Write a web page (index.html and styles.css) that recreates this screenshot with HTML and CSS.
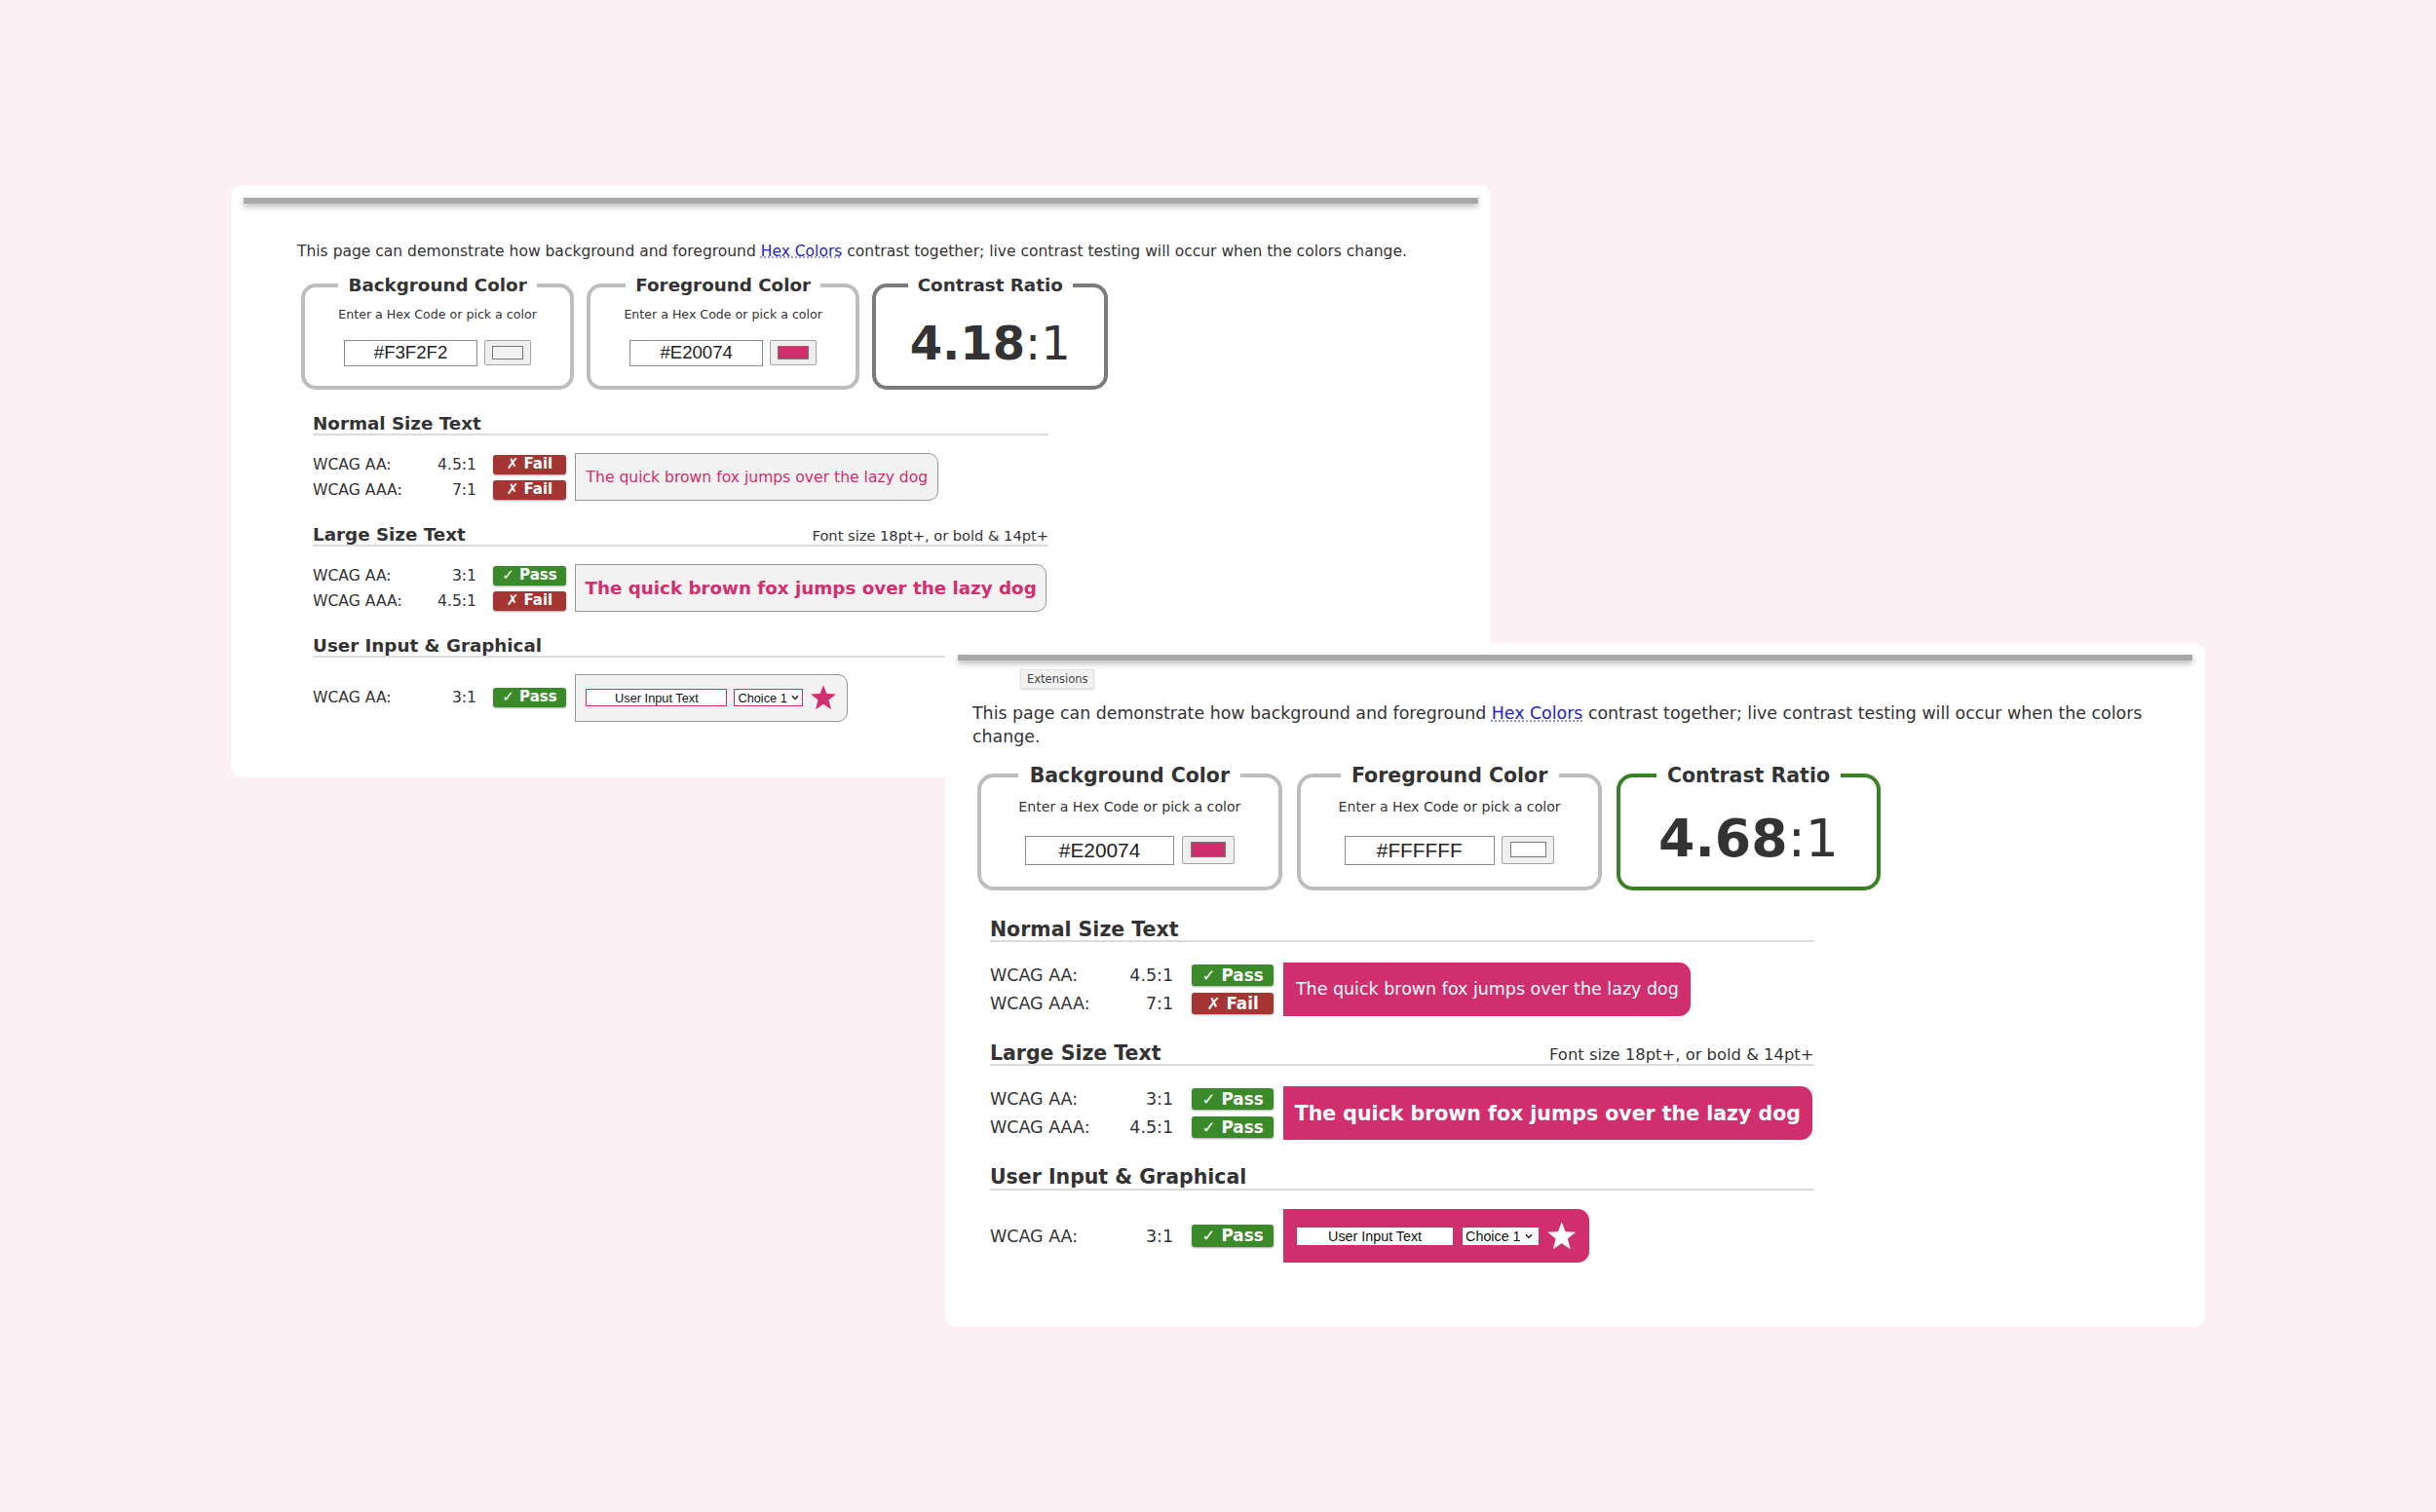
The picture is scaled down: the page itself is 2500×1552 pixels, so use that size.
FILE: index.html
```html
<!DOCTYPE html>
<html lang="en">

<head>
    <meta charset="UTF-8">
    <title>Contrast Checker</title>
    <link rel="stylesheet" href="styles.css">
</head>

<body>
    <div class="desk">
        <!-- first capture: light background, pink text -->
        <div class="window win-a">
            <div class="chrome-bar"></div>
            <div class="checker theme-a">
                <p class="intro">This page can demonstrate how background and foreground <a href="#">Hex Colors</a> contrast together; live contrast testing will occur when the colors change.</p>
                <div class="pickers">
                    <fieldset class="picker">
                        <legend>Background Color</legend>
                        <p class="hint">Enter a Hex Code or pick a color</p>
                        <div class="pick">
                            <input class="hex" type="text" value="#F3F2F2">
                            <span class="swatch"><span class="chip light"></span></span>
                        </div>
                    </fieldset>
                    <fieldset class="picker">
                        <legend>Foreground Color</legend>
                        <p class="hint">Enter a Hex Code or pick a color</p>
                        <div class="pick">
                            <input class="hex" type="text" value="#E20074">
                            <span class="swatch"><span class="chip pink"></span></span>
                        </div>
                    </fieldset>
                    <fieldset class="picker ratio-box">
                        <legend>Contrast Ratio</legend>
                        <div class="ratio"><b>4.18</b>:1</div>
                    </fieldset>
                </div>

                <section class="level">
                    <h3>Normal Size Text</h3>
                    <div class="level-body">
                        <div class="checks">
                            <div class="check"><span class="name">WCAG AA:</span><span class="need">4.5:1</span><span class="badge fail">&#10007; Fail</span></div>
                            <div class="check"><span class="name">WCAG AAA:</span><span class="need">7:1</span><span class="badge fail">&#10007; Fail</span></div>
                        </div>
                        <div class="sample">The quick brown fox jumps over the lazy dog</div>
                    </div>
                </section>

                <section class="level">
                    <h3>Large Size Text <small>Font size 18pt+, or bold &amp; 14pt+</small></h3>
                    <div class="level-body">
                        <div class="checks">
                            <div class="check"><span class="name">WCAG AA:</span><span class="need">3:1</span><span class="badge pass">&#10003; Pass</span></div>
                            <div class="check"><span class="name">WCAG AAA:</span><span class="need">4.5:1</span><span class="badge fail">&#10007; Fail</span></div>
                        </div>
                        <div class="sample large">The quick brown fox jumps over the lazy dog</div>
                    </div>
                </section>

                <section class="level">
                    <h3>User Input &amp; Graphical</h3>
                    <div class="level-body">
                        <div class="checks">
                            <div class="check"><span class="name">WCAG AA:</span><span class="need">3:1</span><span class="badge pass">&#10003; Pass</span></div>
                        </div>
                        <div class="sample widgets">
                            <span class="field">User Input Text</span>
                            <span class="field choice">Choice 1 <svg width="8" height="6" viewBox="0 0 8 6"><path d="M1 1.2 L4 4.4 L7 1.2" fill="none" stroke="#222" stroke-width="1.5"/></svg></span>
                            <svg class="star" viewBox="0 0 24 24"><polygon points="12,1 14.9,8.6 23,9 16.7,14.2 18.8,22.4 12,17.8 5.2,22.4 7.3,14.2 1,9 9.1,8.6" fill="currentColor"/></svg>
                        </div>
                    </div>
                </section>
            </div>
        </div>

        <!-- second capture: pink background, white text -->
        <div class="window win-b">
            <div class="chrome-bar"></div>
            <span class="tip">Extensions</span>
            <div class="checker theme-b">
                <p class="intro">This page can demonstrate how background and foreground <a href="#">Hex Colors</a> contrast together; live contrast testing will occur when the colors change.</p>
                <div class="pickers">
                    <fieldset class="picker">
                        <legend>Background Color</legend>
                        <p class="hint">Enter a Hex Code or pick a color</p>
                        <div class="pick">
                            <input class="hex" type="text" value="#E20074">
                            <span class="swatch"><span class="chip pink"></span></span>
                        </div>
                    </fieldset>
                    <fieldset class="picker">
                        <legend>Foreground Color</legend>
                        <p class="hint">Enter a Hex Code or pick a color</p>
                        <div class="pick">
                            <input class="hex" type="text" value="#FFFFFF">
                            <span class="swatch"><span class="chip white"></span></span>
                        </div>
                    </fieldset>
                    <fieldset class="picker ratio-box">
                        <legend>Contrast Ratio</legend>
                        <div class="ratio"><b>4.68</b>:1</div>
                    </fieldset>
                </div>

                <section class="level">
                    <h3>Normal Size Text</h3>
                    <div class="level-body">
                        <div class="checks">
                            <div class="check"><span class="name">WCAG AA:</span><span class="need">4.5:1</span><span class="badge pass">&#10003; Pass</span></div>
                            <div class="check"><span class="name">WCAG AAA:</span><span class="need">7:1</span><span class="badge fail">&#10007; Fail</span></div>
                        </div>
                        <div class="sample">The quick brown fox jumps over the lazy dog</div>
                    </div>
                </section>

                <section class="level">
                    <h3>Large Size Text <small>Font size 18pt+, or bold &amp; 14pt+</small></h3>
                    <div class="level-body">
                        <div class="checks">
                            <div class="check"><span class="name">WCAG AA:</span><span class="need">3:1</span><span class="badge pass">&#10003; Pass</span></div>
                            <div class="check"><span class="name">WCAG AAA:</span><span class="need">4.5:1</span><span class="badge pass">&#10003; Pass</span></div>
                        </div>
                        <div class="sample large">The quick brown fox jumps over the lazy dog</div>
                    </div>
                </section>

                <section class="level">
                    <h3>User Input &amp; Graphical</h3>
                    <div class="level-body">
                        <div class="checks">
                            <div class="check"><span class="name">WCAG AA:</span><span class="need">3:1</span><span class="badge pass">&#10003; Pass</span></div>
                        </div>
                        <div class="sample widgets">
                            <span class="field">User Input Text</span>
                            <span class="field choice">Choice 1 <svg width="8" height="6" viewBox="0 0 8 6"><path d="M1 1.2 L4 4.4 L7 1.2" fill="none" stroke="#222" stroke-width="1.5"/></svg></span>
                            <svg class="star" viewBox="0 0 24 24"><polygon points="12,1 14.9,8.6 23,9 16.7,14.2 18.8,22.4 12,17.8 5.2,22.4 7.3,14.2 1,9 9.1,8.6" fill="currentColor"/></svg>
                        </div>
                    </div>
                </section>
            </div>
        </div>
    </div>
</body>

</html>
```

FILE: styles.css
```css
* {
    box-sizing: border-box;
}

body {
    margin: 0;
    background: #fdf0f5;
    font-family: "DejaVu Sans", Verdana, sans-serif;
    color: #333;
}

.desk {
    position: relative;
    width: 2500px;
    height: 1552px;
}

/* the two screenshots sit on the pink desk like windows */
.window {
    position: absolute;
    background: #fff;
    border-radius: 12px;
    overflow: hidden;
}

.win-a {
    left: 237px;
    top: 190px;
    width: 1293px;
    height: 608px;
}

.win-b {
    left: 970px;
    top: 660px;
    width: 1293px;
    height: 702px;
}

.chrome-bar {
    margin: 13px 13px 0;
    height: 6px;
    background: #a8a8a8;
    box-shadow: 0 3px 6px rgba(0, 0, 0, .3);
}

.win-b .chrome-bar {
    margin-top: 12px;
}

.tip {
    position: absolute;
    left: 77px;
    top: 27px;
    padding: 2px 6px;
    font-size: 11.5px;
    color: #444;
    background: #f2f2f2;
    border: 1px solid #e2e2e2;
    box-shadow: 0 1px 2px rgba(0, 0, 0, .15);
}

.checker {
    font-size: 15px;
    padding: 0 40px 0 68px;
}

.win-b .checker {
    font-size: 16.8px;
    padding-left: 28px;
}

.intro {
    margin: 2.5em 0 0;
    font-size: 1.035em;
    line-height: 1.35;
}

.intro a {
    color: #2323c4;
    text-decoration: underline dotted #8888cc;
}

/* colour pickers */
.pickers {
    display: flex;
    gap: .87em;
    margin: .9em 0 0 .27em;
}

.picker {
    margin: 0;
    width: 18.67em;
    padding: .7em 0 1.33em;
    border: .27em solid #bdbdbd;
    border-radius: 1em;
    text-align: center;
}

.picker legend {
    margin: 0 auto;
    padding: 0 .55em;
    font-size: 1.22em;
    line-height: 1.2;
    font-weight: bold;
}

.hint {
    margin: 0;
    font-size: .84em;
    line-height: 1.27;
}

.pick {
    display: flex;
    justify-content: center;
    gap: .47em;
    margin-top: 1.2em;
}

.hex {
    width: 7.37em;
    height: 1.45em;
    padding: 0;
    font-family: "Liberation Sans", Arial, sans-serif;
    font-size: 1.24em;
    color: #222;
    text-align: center;
    border: 1px solid #8c8c8c;
}

.swatch {
    display: block;
    width: 3.2em;
    height: 1.73em;
    padding: .33em .45em;
    background: #efefef;
    border: 1px solid #a5a5a5;
    border-radius: 2px;
}

.chip {
    display: block;
    height: 100%;
    border: 1px solid #777;
}

.chip.light {
    background: #f3f2f2;
}

.chip.pink {
    background: #d12e6e;
}

.chip.white {
    background: #fff;
}

.ratio-box {
    width: 16.13em;
    border-color: #7b7b7b;
}

.win-b .ratio-box {
    border-color: #3b8026;
}

.ratio {
    margin-top: .27em;
    font-size: 3.2em;
    line-height: 1;
}

/* wcag levels */
.level {
    width: 50.33em;
    margin: 1.53em 0 0 1.07em;
}

.pickers + .level {
    margin-top: 1.67em;
}

.level h3 {
    display: flex;
    justify-content: space-between;
    align-items: baseline;
    margin: 0;
    font-size: 1.22em;
    line-height: 1.09;
    border-bottom: 2px solid #dcdcdc;
}

.level h3 small {
    font-size: .8em;
    font-weight: normal;
}

.level-body {
    display: flex;
    align-items: center;
    margin-top: 1.15em;
}

.check {
    display: flex;
    align-items: center;
    height: 1.73em;
}

.name {
    width: 7.05em;
    font-size: 1.04em;
}

.need {
    width: 3.72em;
    font-size: 1.04em;
    text-align: right;
}

.badge {
    width: 5em;
    height: 1.33em;
    margin-left: 1.13em;
    font-size: 1em;
    line-height: 1.33em;
    font-weight: bold;
    color: #fff;
    text-align: center;
    border-radius: 3px;
    box-shadow: 0 1px 2px rgba(0, 0, 0, .35);
}

.badge.pass {
    background: #3b8a2a;
}

.badge.fail {
    background: #a53532;
}

.sample {
    display: flex;
    align-items: center;
    gap: .45em;
    height: 3.14em;
    margin-left: .58em;
    padding: 0 .64em 0 .67em;
    font-size: 1.04em;
    white-space: nowrap;
    border: 1px solid;
    border-radius: 0 .64em .64em 0;
}

.sample.large {
    font-size: 1.22em;
    font-weight: bold;
    height: 2.68em;
    margin-left: .49em;
    padding: 0 .52em;
    border-radius: 0 .55em .55em 0;
}

.theme-a .sample {
    background: #f3f2f2;
    color: #d12e6e;
    border-color: #939393;
}

.theme-b .sample {
    background: #d12e6e;
    color: #fff;
    border-color: #d12e6e;
}

.field {
    display: flex;
    align-items: center;
    justify-content: center;
    gap: 4px;
    width: 11.33em;
    height: 1.4em;
    font-family: "Liberation Sans", Arial, sans-serif;
    font-size: .82em;
    color: #111;
    background: #fff;
    border: 1px solid #d12e6e;
}

.field.choice {
    width: 5.55em;
    justify-content: flex-start;
    padding-left: 3px;
}

.star {
    width: 1.8em;
    height: 1.8em;
}
```
